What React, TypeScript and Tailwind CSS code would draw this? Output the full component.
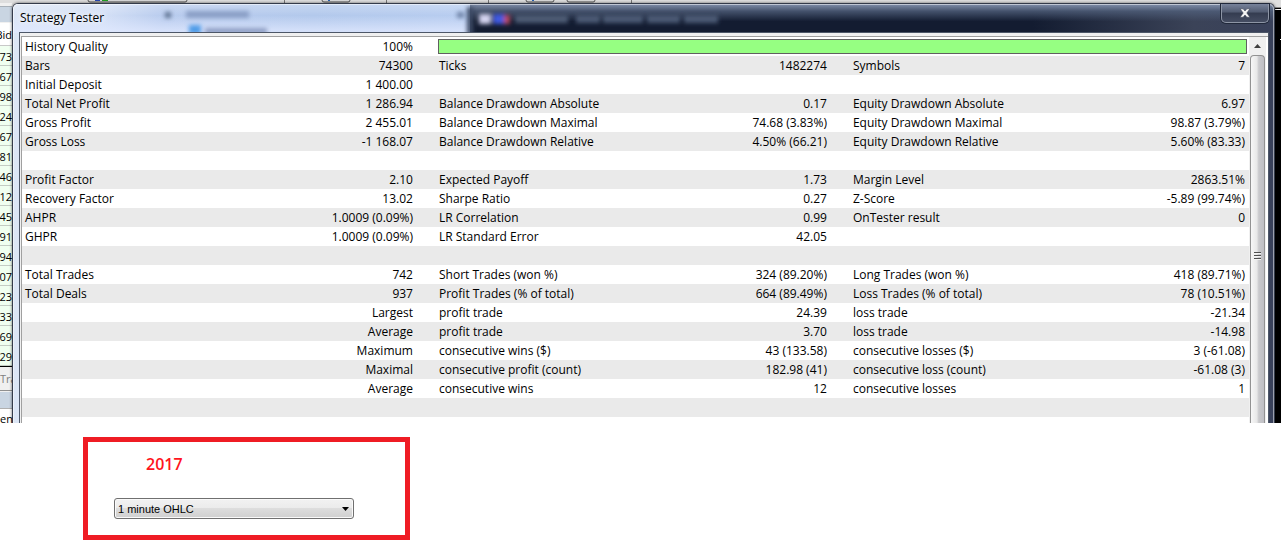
type Row = [string, string, string?, string?, string?, string?];

const rows: Row[] = [
  ["Bars", "74300", "Ticks", "1482274", "Symbols", "7"],
  ["Initial Deposit", "1 400.00"],
  ["Total Net Profit", "1 286.94", "Balance Drawdown Absolute", "0.17", "Equity Drawdown Absolute", "6.97"],
  ["Gross Profit", "2 455.01", "Balance Drawdown Maximal", "74.68 (3.83%)", "Equity Drawdown Maximal", "98.87 (3.79%)"],
  ["Gross Loss", "-1 168.07", "Balance Drawdown Relative", "4.50% (66.21)", "Equity Drawdown Relative", "5.60% (83.33)"],
  ["", ""],
  ["Profit Factor", "2.10", "Expected Payoff", "1.73", "Margin Level", "2863.51%"],
  ["Recovery Factor", "13.02", "Sharpe Ratio", "0.27", "Z-Score", "-5.89 (99.74%)"],
  ["AHPR", "1.0009 (0.09%)", "LR Correlation", "0.99", "OnTester result", "0"],
  ["GHPR", "1.0009 (0.09%)", "LR Standard Error", "42.05"],
  ["", ""],
  ["Total Trades", "742", "Short Trades (won %)", "324 (89.20%)", "Long Trades (won %)", "418 (89.71%)"],
  ["Total Deals", "937", "Profit Trades (% of total)", "664 (89.49%)", "Loss Trades (% of total)", "78 (10.51%)"],
  ["", "Largest", "profit trade", "24.39", "loss trade", "-21.34"],
  ["", "Average", "profit trade", "3.70", "loss trade", "-14.98"],
  ["", "Maximum", "consecutive wins ($)", "43 (133.58)", "consecutive losses ($)", "3 (-61.08)"],
  ["", "Maximal", "consecutive profit (count)", "182.98 (41)", "consecutive loss (count)", "-61.08 (3)"],
  ["", "Average", "consecutive wins", "12", "consecutive losses", "1"],
  ["", ""],
];

const bids = ["373", "467", "398", "524", "267", "581", "746", "312", "245", "091", "194", "507", "923", "333", "269", "329"];

function Toolbar() {
  return (
    <div className="flex h-[3px] overflow-hidden bg-[#dedede]">
      <svg className="h-[3px] w-full shrink-0" aria-hidden="true">
        <rect x="88" y="-6" width="99" height="8" rx="2" fill="#d8d8d8" stroke="#555" />
        <rect x="95" y="0" width="5" height="1" fill="#2848b0" />
        <rect x="102" y="0" width="6" height="1" fill="#20a020" />
        <rect x="284" y="0" width="1" height="3" fill="#777" />
        <rect x="322" y="-6" width="28" height="8" rx="2" fill="#d8d8d8" stroke="#555" />
        <rect x="328" y="0" width="2" height="1" fill="#2860b0" />
        <rect x="386" y="0" width="1" height="3" fill="#777" />
        <rect x="488" y="0" width="1" height="3" fill="#777" />
        <rect x="526" y="-6" width="28" height="8" rx="2" fill="#d8d8d8" stroke="#555" />
        <rect x="532" y="0" width="2" height="1" fill="#2860b0" />
        <rect x="567" y="-6" width="28" height="8" rx="2" fill="#d8d8d8" stroke="#555" />
        <rect x="631" y="0" width="1" height="3" fill="#777" />
      </svg>
    </div>
  );
}

function MarketWatch() {
  return (
    <div className="relative w-3 shrink-0">
      <div className="absolute inset-0 flex flex-col overflow-hidden bg-[#f0f0f0] text-[11px] leading-[21px]">
        <div className="mt-[3px] h-4 shrink-0 border-t border-[#a8b0b8] bg-[#c9d5e2]" />
        <div className="mt-px flex h-[23px] shrink-0 items-center justify-end border-b border-[#c8c8c8] bg-white">
          Bid
        </div>
        {bids.map((b, i) => (
          <div
            key={i}
            className="flex h-5 shrink-0 justify-end border-b border-[#c4ccc4] bg-[#f0fff0]"
          >
            {b}
          </div>
        ))}
        <div className="flex h-6 shrink-0 items-center border-t border-black text-[#808080]">Tra</div>
        <div className="h-px shrink-0 bg-[#909090]" />
        <div className="mt-px h-4 shrink-0 bg-[#c9d5e2]" />
        <div className="flex h-5 shrink-0 items-center border-t border-[#b0b0b0] bg-white">en</div>
      </div>
    </div>
  );
}

function GlassBackdrop() {
  return (
    <div className="absolute inset-0 flex overflow-hidden rounded-t-[5px]" aria-hidden="true">
      <div className="h-full w-[457px] shrink-0 bg-[linear-gradient(90deg,#dce6f5_0,#d4e0f6_90px,#b9ccee_150px,#b3c9ec_300px,#b8cdf0_100%)]">
        <div className="h-[29px] bg-[linear-gradient(180deg,rgba(255,255,255,0.25)_0,rgba(255,255,255,0)_40%,rgba(225,233,255,0.7)_90%)]" />
      </div>
      <div className="h-full grow bg-[linear-gradient(90deg,#131c31_0,#131c31_70%,#3b4358_90%,#39415a_100%)]">
        <div className="h-[29px] bg-[linear-gradient(180deg,#8290ab_0,rgba(80,95,122,0.8)_25%,rgba(19,28,49,0)_60%)]" />
      </div>
      <svg className="absolute left-0 top-0 h-[29px] w-full" aria-hidden="true">
        <defs>
          <filter id="soft" x="-20%" y="-80%" width="140%" height="260%">
            <feGaussianBlur stdDeviation="2" />
          </filter>
        </defs>
        <g filter="url(#soft)">
          <rect x="152" y="8" width="6" height="6" fill="#5f7392" />
          <rect x="173" y="7" width="63" height="7" fill="#8a9fc6" />
          <rect x="176" y="21" width="12" height="9" fill="#4f9ce8" />
          <rect x="192" y="24" width="62" height="6" fill="#8e9ec4" />
          <rect x="444" y="8" width="7" height="6" fill="#6f84a8" />
          <rect x="454" y="3" width="6" height="28" fill="#3e4b66" />
          <rect x="466" y="10" width="12" height="10" fill="#d3d3ef" />
          <rect x="480" y="10" width="12" height="10" fill="#4058e0" />
          <rect x="491" y="11" width="6" height="9" fill="#b84860" />
          <rect x="502" y="11" width="53" height="8" fill="#4e5b74" />
          <rect x="563" y="11" width="24" height="8" fill="#4c5a74" />
          <rect x="590" y="11" width="40" height="8" fill="#4c5a74" />
          <rect x="634" y="11" width="33" height="8" fill="#4c5a74" />
          <rect x="671" y="11" width="34" height="8" fill="#4c5a74" />
        </g>
      </svg>
    </div>
  );
}

function ScrollBar() {
  return (
    <div className="flex w-[17px] shrink-0 flex-col bg-[#f0f0f0]">
      <button type="button" aria-label="Scroll up" className="flex h-[18px] items-center justify-center">
        <svg width="7" height="4" viewBox="0 0 7 4" aria-hidden="true">
          <path d="M3.5 0L7 4H0z" fill="#404040" />
        </svg>
      </button>
      <div className="ml-px mr-px flex grow flex-col items-center justify-center rounded-t-sm border border-b-0 border-[#929292] bg-[linear-gradient(90deg,#f7f7f7_0,#e8e8e8_45%,#c9c9cc_60%,#bfbfc4_100%)] pt-8">
        <svg width="7" height="8" viewBox="0 0 7 8" aria-hidden="true">
          <path d="M0 .5H7M0 3.5H7M0 6.5H7" stroke="#505050" />
          <path d="M0 1.5H7M0 4.5H7M0 7.5H7" stroke="#f4f4f4" />
        </svg>
      </div>
    </div>
  );
}

function ReportTable() {
  return (
    <table className="w-full table-fixed border-collapse bg-white text-[12px] leading-[19px] text-black">
      <colgroup>
        <col className="w-[17%]" />
        <col className="w-[16.74%]" />
        <col className="w-[17%]" />
        <col className="w-[16.74%]" />
        <col className="w-[17%]" />
        <col />
      </colgroup>
      <tbody>
        <tr className="h-[19px]">
          <td className="p-0 pl-[3px]">History Quality</td>
          <td className="p-0 pr-[23px] text-right">100%</td>
          <td colSpan={4} className="p-0 px-0.5">
            <div className="h-[15px] border border-[#606060] bg-[#96ff82]" />
          </td>
        </tr>
        {rows.map((r, i) => (
          <tr key={i} className="h-[19px] whitespace-nowrap odd:bg-white even:bg-[#eaeaea]">
            <td className="p-0 pl-[3px]">{r[0]}</td>
            <td className="p-0 pr-[23px] text-right">{r[1]}</td>
            <td className="p-0 pl-[3px]">{r[2]}</td>
            <td className="p-0 pr-[23px] text-right">{r[3]}</td>
            <td className="p-0 pl-[3px]">{r[4]}</td>
            <td className="p-0 pr-1 text-right">{r[5]}</td>
          </tr>
        ))}
      </tbody>
    </table>
  );
}

function TesterWindow() {
  return (
    <section className="relative min-w-0 grow rounded-t-md border border-b-0 border-[#343b4a] shadow-[0_0_3px_rgba(0,0,0,0.6)]">
      <GlassBackdrop />
      <div className="relative rounded-t-[5px] border border-b-0 border-white/50 pl-[5px] pr-1">
        <header className="flex h-[27px] items-start justify-between">
          <h1 className="pl-px pt-[3px] text-[12px] leading-[19px] text-black [text-shadow:0_0_6px_white,0_0_6px_white]">
            Strategy Tester
          </h1>
          <button
            type="button"
            aria-label="Close"
            className="-mt-px flex h-[19px] w-12 items-center justify-center rounded-b-[5px] border border-t-0 border-[#8d95a5] bg-[linear-gradient(180deg,#77829a_0,#515b71_45%,#343c50_50%,#454d62_100%)] shadow-[0_0_0_1px_#20283a]"
          >
            <svg width="12" height="10" viewBox="0 0 12 10" aria-hidden="true">
              <path
                d="M1 .8H4.2L6 3L7.8.8H11L7.8 5L11 9.2H7.8L6 7L4.2 9.2H1L4.2 5Z"
                fill="#f4f4f4"
                stroke="#3a4256"
                strokeWidth=".6"
              />
            </svg>
          </button>
        </header>
        <div className="border border-b-0 border-[#4d5768] bg-[#f0f0f0] pl-px pt-[3px]">
          <div className="flex border-l border-t border-[#a0a0a0] bg-white pr-0.5">
            <div className="min-w-0 grow pb-1.5">
              <ReportTable />
            </div>
            <ScrollBar />
          </div>
        </div>
      </div>
    </section>
  );
}

export default function App() {
  return (
    <div className="min-h-screen bg-white font-['Open_Sans','Noto_Sans',sans-serif]">
      <div className="overflow-hidden">
        <Toolbar />
        <main className="flex bg-[#dedede]">
          <MarketWatch />
          <TesterWindow />
          <div className="w-1.5 shrink-0 bg-black">
            <div className="h-[5px] border-b border-[#888] bg-[#dedede]" />
            <div className="mt-px h-px bg-white" />
            <div className="ml-auto mt-[29px] h-px w-px bg-white" />
          </div>
        </main>
      </div>
      <div className="ml-[83px] mt-3.5 w-[327px] border-[5px] border-[#ef1c24] px-[26px] pb-4 pt-3">
        <p className="pl-8 text-[16px] font-semibold leading-[20px] text-[#ff1420]">2017</p>
        <label className="relative mt-6 block w-[240px]">
          <span className="sr-only">Modelling mode</span>
          <select className="block h-[21px] w-full appearance-none rounded-[3px] border border-[#707070] bg-[linear-gradient(180deg,#f2f2f2_0,#ebebeb_48%,#dddddd_50%,#cfcfcf_100%)] pl-[3px] pt-px font-['Liberation_Sans',sans-serif] text-[11px] leading-[18px] text-black shadow-[inset_0_0_0_1px_#fafafa]">
            <option>1 minute OHLC</option>
          </select>
          <svg className="pointer-events-none absolute right-[5px] top-[9px]" width="7" height="4" viewBox="0 0 7 4" aria-hidden="true">
            <path d="M0 0H7L3.5 4z" fill="#000" />
          </svg>
        </label>
      </div>
    </div>
  );
}
